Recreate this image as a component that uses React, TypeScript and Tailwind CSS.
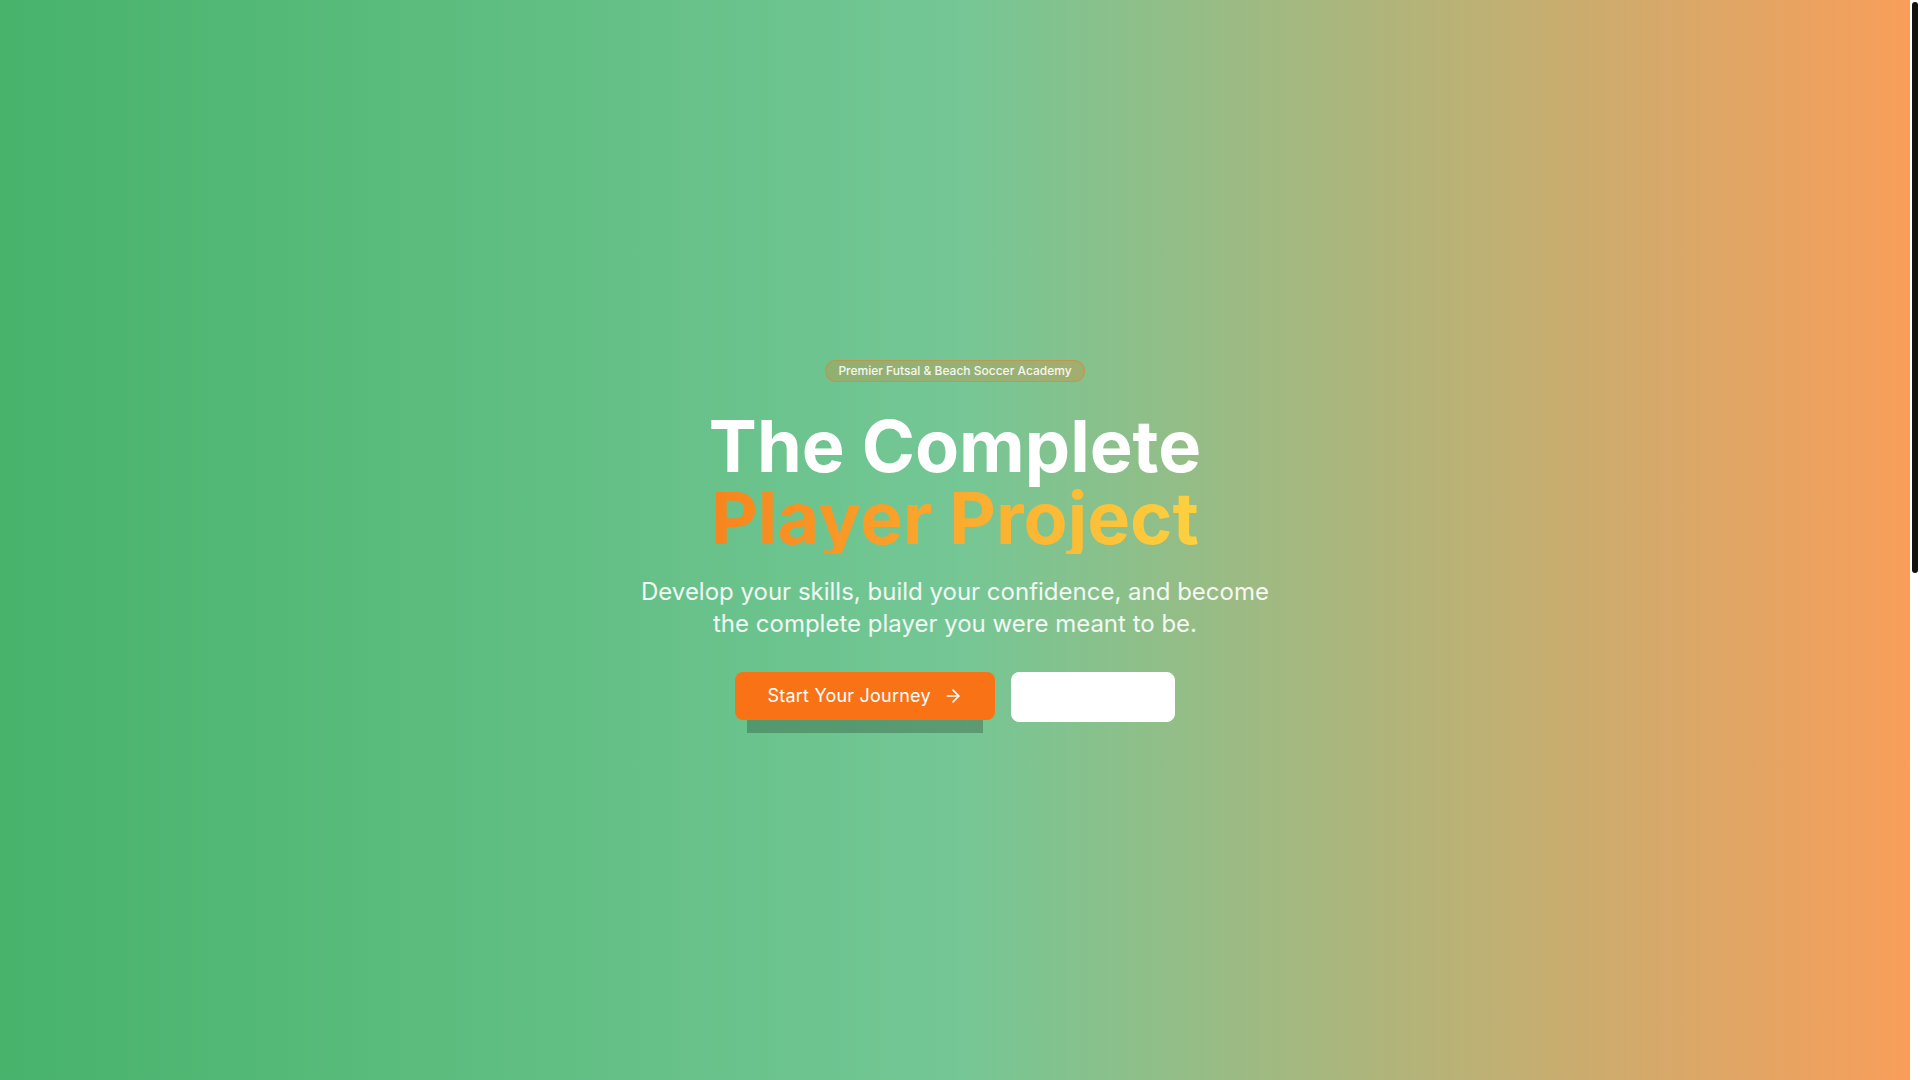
import { ArrowRight } from 'lucide-react';

export default function App() {
  return (
    <div className="flex items-start font-['Inter','Noto_Sans',sans-serif]">
      <main className="flex-1 min-w-0">
        <section className="min-h-screen flex items-center justify-center bg-[linear-gradient(to_right,#47b36b,#74c795,#f99e5a)]">
          <div className="flex flex-col items-center text-center px-4 pt-[2px]">
            <span className="mb-7 px-3 py-0.5 rounded-full border border-[#f97316]/40 bg-[#f97316]/25 text-xs font-medium text-white/90">
              Premier Futsal &amp; Beach Soccer Academy
            </span>

            <h1 className="text-7xl leading-none font-bold text-white">
              <span className="block">The Complete</span>
              <span className="inline-block bg-[linear-gradient(to_right,#f7841d,#fdd13f)] bg-clip-text text-transparent">
                Player Project
              </span>
            </h1>

            <p className="mt-[22px] mb-8 max-w-[640px] text-2xl text-white/90">
              Develop your skills, build your confidence, and become the complete player you were meant to be.
            </p>

            <div className="flex items-start gap-4">
              <button className="flex items-center gap-3 px-8 py-2.5 rounded-lg bg-[#f97316] text-lg tracking-[0.012em] text-white shadow-[0_25px_0_-12px_rgba(0,0,0,0.22)]">
                Start Your Journey
                <ArrowRight className="w-5 h-5" />
              </button>
              <button className="px-8 py-2.5 rounded-lg border border-white bg-white text-lg text-white">
                Learn More
              </button>
            </div>
          </div>
        </section>

        <section className="h-[1260px] bg-white" />
      </main>

      {/* scrollbar as it shows in the screenshot */}
      <div className="sticky top-0 h-screen w-[10px] shrink-0 bg-white p-[2px]">
        <div className="h-[571px] rounded-full bg-[#111111]" />
      </div>
    </div>
  );
}
